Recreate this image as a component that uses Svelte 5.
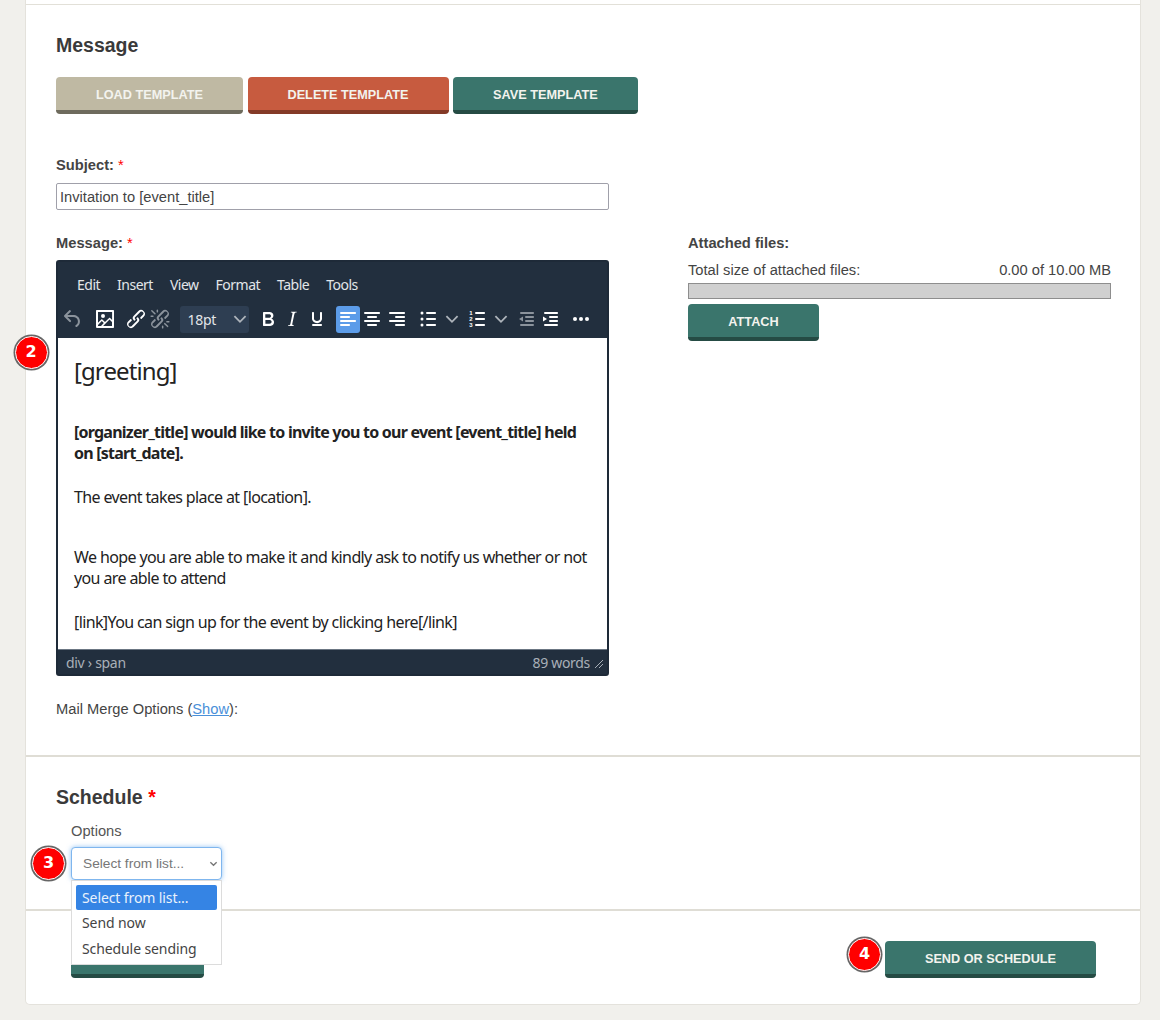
<script>
  const templateButtons = [
    { label: 'Load Template', kind: 'tan' },
    { label: 'Delete Template', kind: 'red' },
    { label: 'Save Template', kind: 'teal' }
  ];
  const menus = ['Edit', 'Insert', 'View', 'Format', 'Table', 'Tools'];
  const options = ['Select from list...', 'Send now', 'Schedule sending'];
</script>

<div class="card">
  <section class="message">
    <h2>Message</h2>
    <div class="template-buttons">
      {#each templateButtons as b}
        <button class="btn {b.kind}">{b.label}</button>
      {/each}
    </div>

    <label class="field-label subject-label" for="subject">Subject: <span class="req">*</span></label>
    <input id="subject" class="subject" type="text" value="Invitation to [event_title]" />

    <div class="columns">
      <div class="left">
        <div class="field-label">Message: <span class="req">*</span></div>
        <div class="editor-wrap">
          <span class="badge badge-editor">2</span>
          <div class="editor">
            <div class="menubar">
              {#each menus as m}
                <span>{m}</span>
              {/each}
            </div>
            <div class="toolbar">
              <div class="group">
                <span class="tb dim"><svg viewBox="0 0 24 24"><path d="M6.4 8H12c3.7 0 6.2 2 6.8 5.1.6 2.7-.4 5.6-2.9 6.8a1 1 0 0 1-1-1.8c1.6-.7 2.3-2.8 1.9-4.6C16.4 11.5 14.8 10 12 10H6.4l3.3 3.3a1 1 0 1 1-1.4 1.4l-5-5a1 1 0 0 1 0-1.4l5-5a1 1 0 0 1 1.4 1.4L6.4 8z"/></svg></span>
              </div>
              <div class="group">
                <span class="tb"><svg viewBox="0 0 24 24"><path d="M5 15.7l3.3-3.2c.3-.3.7-.3 1 0L12 15l4.1-4c.3-.4.8-.4 1 0l2 1.9V5H5v10.7zM5 18v1h3l2.8-2.9-2-2L5 17.9zm14-3l-2.5-2.4-6.4 6.5H19v-4zM4 3h16c.6 0 1 .4 1 1v16c0 .6-.4 1-1 1H4a1 1 0 0 1-1-1V4c0-.6.4-1 1-1zm6 8a2 2 0 1 0 0-4 2 2 0 0 0 0 4z"/></svg></span>
              </div>
              <div class="group">
                <span class="tb"><svg viewBox="0 0 24 24"><path d="M6.2 12.3a1 1 0 0 1 1.4 1.4l-2.1 2.1a2 2 0 1 0 2.7 2.7l4.8-4.8a1 1 0 0 0 0-1.4 1 1 0 1 1 1.4-1.3 2.9 2.9 0 0 1 0 4L9.6 20a3.9 3.9 0 0 1-5.5-5.5l2-2zm11.6-.6a1 1 0 0 1-1.4-1.4l2-2a2 2 0 1 0-2.6-2.8L11 10.3a1 1 0 0 0 0 1.4A1 1 0 1 1 9.6 13a2.9 2.9 0 0 1 0-4L14.4 4a3.9 3.9 0 0 1 5.5 5.5l-2 2z"/></svg></span>
                <span class="tb dim"><svg viewBox="0 0 24 24"><path d="M6.2 12.3a1 1 0 0 1 1.4 1.4l-2 2a2 2 0 1 0 2.6 2.8l4.8-4.8a1 1 0 0 0 0-1.4 1 1 0 1 1 1.4-1.3 2.9 2.9 0 0 1 0 4L9.6 20a3.9 3.9 0 0 1-5.5-5.5l2-2zm11.6-.6a1 1 0 0 1-1.4-1.4l2.1-2.1a2 2 0 1 0-2.7-2.7L11 10.3a1 1 0 0 0 0 1.4A1 1 0 1 1 9.6 13a2.9 2.9 0 0 1 0-4L14.4 4a3.9 3.9 0 0 1 5.5 5.5l-2 2zM7.6 6.3a.8.8 0 0 1-1 1.1L3.3 4.2a.7.7 0 1 1 1-1l3.2 3.1zM5.1 8.6a.8.8 0 0 1 0 1.5H3a.8.8 0 0 1 0-1.5H5zm5-3.5a.8.8 0 0 1-1.5 0V3a.8.8 0 0 1 1.5 0v2zm6 11.8a.8.8 0 0 1 1-1l3.2 3.2a.8.8 0 0 1-1 1L16 17zm-2.2 2a.8.8 0 0 1 1.5 0V21a.8.8 0 0 1-1.5 0V19zm5-3.5a.7.7 0 1 1 0-1.5H21a.8.8 0 0 1 0 1.5h-2.2z"/></svg></span>
              </div>
              <div class="fontsize">
                <span>18pt</span>
                <svg class="chev" viewBox="0 0 10 10"><path d="M1 3l4 4 4-4" /></svg>
              </div>
              <div class="group">
                <span class="tb"><svg viewBox="0 0 24 24"><path d="M7.8 19c-.3 0-.5 0-.6-.2l-.2-.5V5.7c0-.2 0-.4.2-.5l.6-.2h5c1.5 0 2.7.3 3.5 1 .7.6 1.1 1.4 1.1 2.5a3 3 0 0 1-.6 1.9c-.4.6-1 1-1.6 1.2.4.1.9.3 1.3.6s.8.7 1 1.2c.4.4.5 1 .5 1.6 0 1.3-.4 2.3-1.3 3-.8.7-2.1 1-3.8 1H7.8zm5-8.3c.6 0 1.2-.1 1.6-.5.4-.3.6-.7.6-1.3 0-1.1-.8-1.7-2.3-1.7H9.3v3.5h3.4zm.5 6c.7 0 1.3-.1 1.7-.4.4-.4.6-.9.6-1.5s-.2-1-.7-1.4c-.4-.3-1-.4-2-.4H9.4v3.8h4z"/></svg></span>
                <span class="tb"><svg viewBox="0 0 24 24"><path d="M16.7 4.7l-.1.9h-.3c-.6 0-1 0-1.4.3-.3.3-.4.6-.5 1.1l-2.1 9.8v.6c0 .5.4.8 1.4.8h.2l-.2.8H8l.2-.8h.2c1.1 0 1.8-.5 2-1.5l2-9.8.1-.5c0-.6-.4-.8-1.4-.8h-.3l.2-.9h5.8z"/></svg></span>
                <span class="tb"><svg viewBox="0 0 24 24"><path d="M16 5c.6 0 1 .4 1 1v5.5a4 4 0 0 1-.4 1.8l-1 1.4a5.3 5.3 0 0 1-5.5 1 5 5 0 0 1-1.6-1c-.5-.4-.8-.9-1.1-1.4a4 4 0 0 1-.4-1.8V6c0-.6.4-1 1-1s1 .4 1 1v5.5c0 .3 0 .6.2 1l.6.7a3.3 3.3 0 0 0 2.2.8 3.4 3.4 0 0 0 2.2-.8c.3-.2.4-.5.6-.8l.2-.9V6c0-.6.4-1 1-1zM8 17h8c.6 0 1 .4 1 1s-.4 1-1 1H8a1 1 0 0 1 0-2z"/></svg></span>
              </div>
              <div class="group">
                <span class="tb active"><svg viewBox="0 0 24 24"><path d="M5 5h14c.6 0 1 .4 1 1s-.4 1-1 1H5a1 1 0 1 1 0-2zm0 4h8c.6 0 1 .4 1 1s-.4 1-1 1H5a1 1 0 1 1 0-2zm0 8h8c.6 0 1 .4 1 1s-.4 1-1 1H5a1 1 0 0 1 0-2zm0-4h14c.6 0 1 .4 1 1s-.4 1-1 1H5a1 1 0 0 1 0-2z"/></svg></span>
                <span class="tb"><svg viewBox="0 0 24 24"><path d="M5 5h14c.6 0 1 .4 1 1s-.4 1-1 1H5a1 1 0 1 1 0-2zm3 4h8c.6 0 1 .4 1 1s-.4 1-1 1H8a1 1 0 1 1 0-2zm0 8h8c.6 0 1 .4 1 1s-.4 1-1 1H8a1 1 0 0 1 0-2zm-3-4h14c.6 0 1 .4 1 1s-.4 1-1 1H5a1 1 0 0 1 0-2z"/></svg></span>
                <span class="tb"><svg viewBox="0 0 24 24"><path d="M5 5h14c.6 0 1 .4 1 1s-.4 1-1 1H5a1 1 0 1 1 0-2zm6 4h8c.6 0 1 .4 1 1s-.4 1-1 1h-8a1 1 0 0 1 0-2zm0 8h8c.6 0 1 .4 1 1s-.4 1-1 1h-8a1 1 0 0 1 0-2zm-6-4h14c.6 0 1 .4 1 1s-.4 1-1 1H5a1 1 0 0 1 0-2z"/></svg></span>
              </div>
              <div class="group">
                <span class="tb"><svg viewBox="0 0 24 24"><path d="M11 5h8c.6 0 1 .4 1 1s-.4 1-1 1h-8a1 1 0 0 1 0-2zm0 6h8c.6 0 1 .4 1 1s-.4 1-1 1h-8a1 1 0 0 1 0-2zm0 6h8c.6 0 1 .4 1 1s-.4 1-1 1h-8a1 1 0 0 1 0-2z"/><circle cx="6" cy="6" r="1.5"/><circle cx="6" cy="12" r="1.5"/><circle cx="6" cy="18" r="1.5"/></svg></span>
                <span class="tb"><svg class="chev" viewBox="0 0 10 10"><path d="M1 3l4 4 4-4" /></svg></span>
                <span class="tb"><svg viewBox="0 0 24 24"><path d="M11 5h8c.6 0 1 .4 1 1s-.4 1-1 1h-8a1 1 0 0 1 0-2zm0 6h8c.6 0 1 .4 1 1s-.4 1-1 1h-8a1 1 0 0 1 0-2zm0 6h8c.6 0 1 .4 1 1s-.4 1-1 1h-8a1 1 0 0 1 0-2z"/><text x="6" y="8" class="num">1</text><text x="6" y="14" class="num">2</text><text x="6" y="20" class="num">3</text></svg></span>
                <span class="tb"><svg class="chev" viewBox="0 0 10 10"><path d="M1 3l4 4 4-4" /></svg></span>
                <span class="tb dim"><svg viewBox="0 0 24 24"><path d="M7 5h12c.6 0 1 .4 1 1s-.4 1-1 1H7a1 1 0 1 1 0-2zm5 4h7c.6 0 1 .4 1 1s-.4 1-1 1h-7a1 1 0 0 1 0-2zm0 4h7c.6 0 1 .4 1 1s-.4 1-1 1h-7a1 1 0 0 1 0-2zm-5 4h12a1 1 0 0 1 0 2H7a1 1 0 0 1 0-2zM9 9.500v5L5 12z"/></svg></span>
                <span class="tb"><svg viewBox="0 0 24 24"><path d="M7 5h12c.6 0 1 .4 1 1s-.4 1-1 1H7a1 1 0 1 1 0-2zm5 4h7c.6 0 1 .4 1 1s-.4 1-1 1h-7a1 1 0 0 1 0-2zm0 4h7c.6 0 1 .4 1 1s-.4 1-1 1h-7a1 1 0 0 1 0-2zm-5 4h12a1 1 0 0 1 0 2H7a1 1 0 0 1 0-2zM5 9.500v5L9 12z"/></svg></span>
              </div>
              <div class="group">
                <span class="tb"><svg viewBox="0 0 24 24"><circle cx="6" cy="12" r="2"/><circle cx="12" cy="12" r="2"/><circle cx="18" cy="12" r="2"/></svg></span>
              </div>
            </div>
            <div class="content">
              <p class="greeting">[greeting]</p>
              <p class="lead"><strong>[organizer_title] would like to invite you to our event [event_title] held on [start_date].</strong></p>
              <p class="wide-gap">The event takes place at [location].</p>
              <p>We hope you are able to make it and kindly ask to notify us whether or not you are able to attend</p>
              <p>[link]You can sign up for the event by clicking here[/link]</p>
            </div>
            <div class="statusbar">
              <span>div › span</span>
              <span class="words">89 words</span>
              <svg class="grip" viewBox="0 0 10 10"><path d="M9 1L1 9M9 5L5 9" /></svg>
            </div>
          </div>
        </div>
        <p class="merge">Mail Merge Options (<a href="#show">Show</a>):</p>
      </div>

      <div class="right">
        <div class="field-label">Attached files:</div>
        <div class="size-row">
          <span>Total size of attached files:</span>
          <span>0.00 of 10.00 MB</span>
        </div>
        <div class="progress"></div>
        <button class="btn teal attach">Attach</button>
      </div>
    </div>
  </section>

  <section class="schedule">
    <h2>Schedule <span class="req">*</span></h2>
    <div class="options-label">Options</div>
    <div class="select-wrap">
      <span class="badge badge-select">3</span>
      <div class="select">
        <span>Select from list...</span>
        <svg class="chev" viewBox="0 0 10 10"><path d="M1.500 3.500L5 7l3.500-3.500" /></svg>
      </div>
      <ul class="dropdown">
        {#each options as o, i}
          <li class:selected={i === 0}>{o}</li>
        {/each}
      </ul>
    </div>
  </section>

  <section class="footer">
    <!-- label sits behind the open dropdown in the screenshot -->
    <button class="btn teal back" aria-label="Back"></button>
    <div class="send-wrap">
      <span class="badge badge-send">4</span>
      <button class="btn teal send">Send or Schedule</button>
    </div>
  </section>
</div>

<style>
  :global(body) {
    background: #f1f0ec;
    font-family: "Liberation Sans", Arial, sans-serif;
    color: #444;
    font-size: 14.7px;
  }

  .card {
    box-sizing: border-box;
    width: 1116px;
    height: 1005px;
    margin-left: 25px;
    padding-top: 4px;
    background: #fff;
    border: 1px solid #e4e2dc;
    border-top: none;
    border-radius: 0 0 5px 5px;
  }

  section {
    box-sizing: border-box;
    border-top: 1px solid #e2e0d8;
  }
  .message {
    height: 751px;
    padding: 29px 29px 0 30px;
  }
  .schedule {
    height: 154px;
    padding: 29px 30px 0;
    border-top: 2px solid #dfddd5;
  }
  .footer {
    display: flex;
    justify-content: space-between;
    padding: 30px 44px 0 45px;
    border-top: 2px solid #dfddd5;
  }

  h2 {
    margin: 0;
    font-size: 19.5px;
    line-height: 23px;
    font-weight: 700;
    color: #3a3a3a;
  }
  .req { color: #f00; font-weight: 400; }
  h2 .req { font-weight: 700; }

  .template-buttons {
    display: flex;
    gap: 4.6px;
    margin-top: 20px;
  }

  .btn {
    box-sizing: border-box;
    height: 37px;
    padding: 3px 40px 0;
    border: none;
    border-radius: 4px;
    font-family: inherit;
    font-size: 12.7px;
    font-weight: 700;
    text-transform: uppercase;
    color: #f3f3ee;
    cursor: pointer;
  }
  .tan { background: #bfb9a3; border-bottom: 4px solid #6e6b5d; }
  .red { background: #c75b3f; border-bottom: 4px solid #843a27; }
  .teal { background: #3a756c; border-bottom: 4px solid #254b44; }

  .field-label {
    display: block;
    font-weight: 700;
    line-height: 18px;
    color: #444;
  }
  .subject-label { margin-top: 42px; }
  .subject {
    display: block;
    box-sizing: border-box;
    width: 553px;
    height: 27px;
    margin-top: 9px;
    padding: 0 3px;
    border: 1px solid #a0a0aa;
    border-radius: 2px;
    font-family: inherit;
    font-size: 14.7px;
    color: #444;
  }

  .columns {
    display: grid;
    grid-template-columns: 553px 423px;
    gap: 79px;
    margin-top: 24px;
  }

  .editor-wrap {
    position: relative;
    margin-top: 8px;
  }
  .editor {
    box-sizing: border-box;
    display: flex;
    flex-direction: column;
    height: 416px;
    border: 2px solid #1e2a38;
    border-radius: 3px;
    background: #222f3e;
    overflow: hidden;
    font-family: "Noto Sans", sans-serif;
  }
  .menubar {
    display: flex;
    gap: 17px;
    height: 43px;
    padding: 13px 0 0 19px;
    box-sizing: border-box;
    font-size: 14px;
    line-height: 19px;
    letter-spacing: -0.5px;
    color: #e3e6e9;
  }
  .toolbar {
    display: flex;
    align-items: center;
    gap: 7px;
    height: 28px;
    padding-left: 3px;
  }
  .group { display: flex; }
  .tb {
    display: flex;
    align-items: center;
    justify-content: center;
    width: 24.4px;
    height: 27px;
    border-radius: 3px;
    fill: #fff;
  }
  .tb svg { width: 24px; height: 24px; }
  .tb.dim { fill: #8b939c; }
  .tb.active { background: #5c9ce9; }
  .num {
    font-family: "Liberation Sans", sans-serif;
    font-size: 6px;
    font-weight: 700;
    text-anchor: middle;
  }
  .chev, .tb svg.chev {
    width: 14px;
    height: 14px;
    fill: none;
    stroke: #aeb4bb;
    stroke-width: 1.300;
  }
  .fontsize {
    display: flex;
    align-items: center;
    justify-content: space-between;
    box-sizing: border-box;
    width: 69px;
    height: 27px;
    padding: 0 2px 0 8px;
    border-radius: 3px;
    background: #2e3e52;
    font-size: 14px;
    letter-spacing: -0.3px;
    color: #e3e6e9;
  }
  .content {
    flex: 1;
    margin-top: 5px;
    padding: 17px 16px 0;
    background: #fff;
    border-bottom: 1px solid #6b7683;
    color: #222;
    font-size: 16px;
    line-height: 21px;
    letter-spacing: -0.62px;
    overflow: hidden;
  }
  .content p { margin: 0 0 23px; }
  .content .greeting {
    margin-bottom: 35px;
    font-size: 24px;
    line-height: 32px;
    letter-spacing: -0.9px;
  }
  .content .lead { letter-spacing: -0.76px; }
  .content .wide-gap { margin-bottom: 39px; }
  .statusbar {
    display: flex;
    align-items: center;
    height: 24px;
    padding: 0 3px 0 8px;
    box-sizing: border-box;
    font-size: 14px;
    letter-spacing: -0.3px;
    color: #a9b0b8;
  }
  .words { margin-left: auto; margin-right: 4px; }
  .grip {
    width: 10px;
    height: 10px;
    margin-top: 4px;
    fill: none;
    stroke: #a9b0b8;
    stroke-width: 1;
  }

  .merge {
    margin: 24px 0 0;
    line-height: 18px;
    color: #444;
  }
  .merge a { color: #4a90d9; }

  .size-row {
    display: flex;
    justify-content: space-between;
    margin-top: 9px;
    line-height: 18px;
  }
  .progress {
    box-sizing: border-box;
    height: 16px;
    margin-top: 4px;
    background: #d0d0d0;
    border: 1px solid #8e8e8e;
  }
  .attach {
    width: 131px;
    margin-top: 5px;
    padding: 3px 0 0;
  }

  .options-label {
    margin: 13px 0 0 15px;
    line-height: 18px;
    color: #555;
  }
  .select-wrap {
    position: relative;
    width: 151px;
    margin: 7px 0 0 15px;
  }
  .select {
    box-sizing: border-box;
    display: flex;
    align-items: center;
    justify-content: space-between;
    height: 33px;
    padding: 0 3px 0 11px;
    border: 1px solid #7fb6ee;
    border-radius: 4px;
    box-shadow: 0 0 5px rgba(100, 170, 240, 0.7);
    background: #fff;
    font-size: 13.7px;
    color: #777;
  }
  .select .chev { stroke: #777; width: 9px; height: 9px; stroke-width: 1.500; }
  .dropdown {
    position: absolute;
    z-index: 2;
    top: 33px;
    left: 0;
    box-sizing: border-box;
    width: 151px;
    height: 85px;
    margin: 0;
    padding: 4px;
    list-style: none;
    background: #fff;
    border: 1px solid #dcdcdc;
    font-family: "Noto Sans", sans-serif;
    font-size: 14px;
    letter-spacing: -0.1px;
    color: #444;
  }
  .dropdown li {
    height: 25.3px;
    line-height: 25px;
    padding-left: 6px;
    border-radius: 2px;
  }
  .dropdown .selected { background: #3584e4; color: #eaf2fc; }

  .back { width: 133px; padding: 0; }
  .send { width: 211px; padding: 3px 0 0; }
  .send-wrap { position: relative; }

  .badge {
    position: absolute;
    z-index: 3;
    box-sizing: border-box;
    width: 33px;
    height: 33px;
    border-radius: 50%;
    background: #f00;
    border: 1.500px solid #fff;
    box-shadow: 0 0 0 1.500px #666;
    color: #fff;
    font-family: "DejaVu Sans", sans-serif;
    font-size: 16px;
    font-weight: 700;
    line-height: 30px;
    text-align: center;
  }
  .badge-editor { left: -41.5px; top: 75.5px; }
  .badge-select { left: -39px; top: 0; }
  .badge-send { left: -37px; top: -3px; }
</style>
